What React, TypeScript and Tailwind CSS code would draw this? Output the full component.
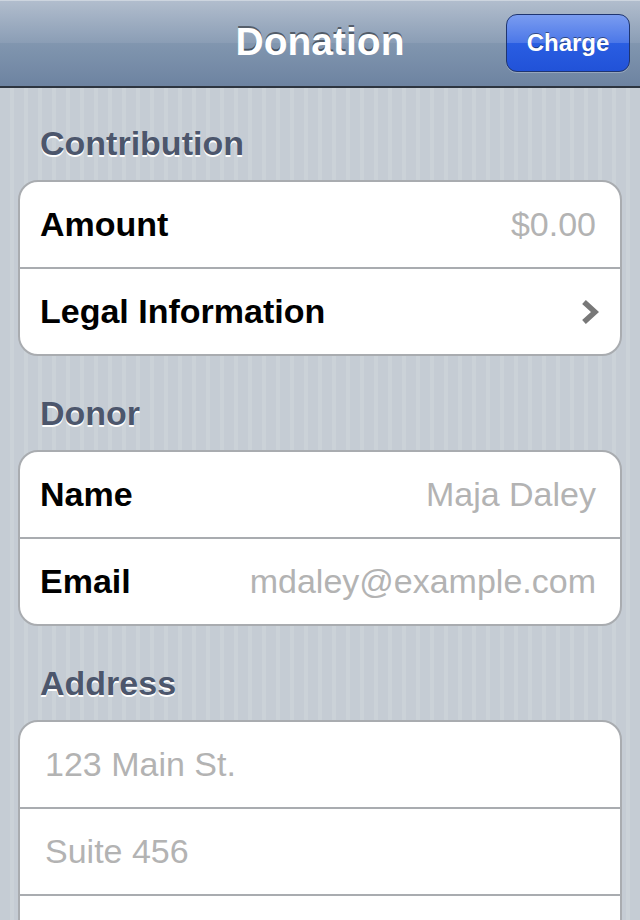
import React from "react";

type Row = { label?: string; value?: string; placeholder?: string; chevron?: boolean };

const sections: { title: string; rows: Row[] }[] = [
  {
    title: "Contribution",
    rows: [
      { label: "Amount", value: "$0.00" },
      { label: "Legal Information", chevron: true },
    ],
  },
  {
    title: "Donor",
    rows: [
      { label: "Name", value: "Maja Daley" },
      { label: "Email", value: "mdaley@example.com" },
    ],
  },
  {
    title: "Address",
    rows: [{ placeholder: "123 Main St." }, { placeholder: "Suite 456" }, {}],
  },
];

export default function App() {
  return (
    <div className="h-[920px] w-[640px] overflow-hidden [font-family:'Liberation_Sans',Arial,sans-serif] bg-[repeating-linear-gradient(90deg,#c5ccd4_0px,#c5ccd4_10px,#cbd2d8_10px,#cbd2d8_14px)]">
      {/* Nav bar */}
      <header className="relative h-[88px] border-t border-[#cdd5df] border-b-2 border-b-[#2d3540] bg-[linear-gradient(#b1bdcd_0%,#8a9db5_50%,#8196af_50%,#6d83a1_100%)]">
        <div className="flex h-full items-center justify-center pb-[4px]">
          <h1 className="text-[39px] font-bold text-white leading-none [text-shadow:0_-2px_0_rgba(0,0,0,0.45)]">
            Donation
          </h1>
        </div>
        <button className="absolute right-[10px] top-[13px] flex h-[58px] w-[124px] items-center justify-center rounded-[11px] border border-[#1f3570] bg-[linear-gradient(#7a9cf0_0%,#4b77e8_50%,#2a5ee2_50%,#2152d8_100%)] text-[24px] font-bold text-white shadow-[0_1px_0_rgba(255,255,255,0.25)] [text-shadow:0_-1px_0_rgba(0,0,0,0.45)]">
          Charge
        </button>
      </header>

      <main className="px-[18px] pt-[35px]">
        {sections.map((s, i) => (
          <section key={s.title} className={i > 0 ? "mt-[37px]" : ""}>
            <h2 className="mb-[17px] pl-[22px] text-[34px] leading-[40px] font-bold text-[#4c566c] [text-shadow:0_2px_0_#ffffff]">
              {s.title}
            </h2>
            <div className="overflow-hidden rounded-[20px] border-2 border-[#a9acb0] bg-white">
              {s.rows.map((r, j) => (
                <div
                  key={j}
                  className={
                    "flex h-[85px] items-center justify-between pr-[24px] " +
                    (j > 0 ? "box-content border-t-2 border-[#a9acb0] " : "") +
                    (r.placeholder ? "pl-[25px]" : "pl-[20px]")
                  }
                >
                  {r.placeholder ? (
                    <span className="text-[34px] text-[#b3b3b3]">{r.placeholder}</span>
                  ) : r.label ? (
                    <span className="text-[34px] font-bold text-black">{r.label}</span>
                  ) : null}
                  {r.value && <span className="text-[34px] text-[#b3b3b3]">{r.value}</span>}
                  {r.chevron && <Chevron />}
                </div>
              ))}
            </div>
          </section>
        ))}
      </main>
    </div>
  );
}

function Chevron() {
  return (
    <svg width="18" height="26" viewBox="0 0 18 26" className="-mr-[3px]">
      <polyline
        points="3,3 14,13 3,23"
        fill="none"
        stroke="#787878"
        strokeWidth="5.5"
        strokeLinejoin="miter"
      />
    </svg>
  );
}
